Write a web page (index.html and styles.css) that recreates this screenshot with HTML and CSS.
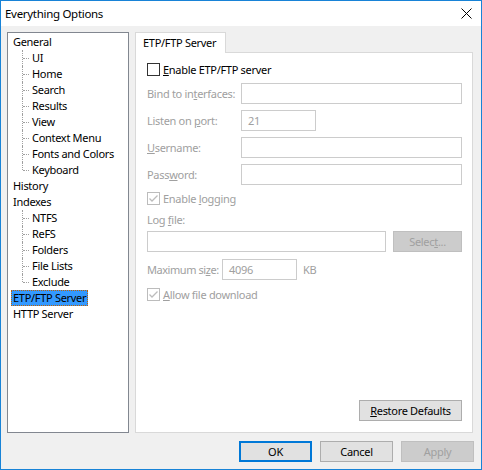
FILE: index.html
```html
<!DOCTYPE html>
<html>
<head>
<meta charset="utf-8">
<link rel="stylesheet" href="styles.css">
</head>
<body>
<div class="window">
  <div class="titlebar">
    <span class="title">Everything Options</span>
    <svg class="close" width="11" height="11" viewBox="0 0 11 11"><path d="M0.5 0.5 L10.5 10.5 M10.5 0.5 L0.5 10.5" stroke="#000" stroke-width="1" fill="none"/></svg>
  </div>
  <div class="client">
    <div class="main">
      <div class="tree">
        <div class="node">General</div>
        <div class="group">
          <div class="child">UI</div>
          <div class="child">Home</div>
          <div class="child">Search</div>
          <div class="child">Results</div>
          <div class="child">View</div>
          <div class="child">Context Menu</div>
          <div class="child">Fonts and Colors</div>
          <div class="child last">Keyboard</div>
        </div>
        <div class="node">History</div>
        <div class="node">Indexes</div>
        <div class="group">
          <div class="child">NTFS</div>
          <div class="child">ReFS</div>
          <div class="child">Folders</div>
          <div class="child">File Lists</div>
          <div class="child last">Exclude</div>
        </div>
        <div class="node selrow"><span class="sel">ETP/FTP Server</span></div>
        <div class="node">HTTP Server</div>
      </div>
      <div class="tabs">
        <div class="tabstrip"><div class="tab">ETP/FTP Server</div></div>
        <div class="panel">
          <div class="cbrow first">
            <span class="cb"></span><span class="cbtext"><u>E</u>nable ETP/FTP server</span>
          </div>
          <div class="field">
            <span class="lbl">Bind to in<u>t</u>erfaces:</span><div class="edit grow"></div>
          </div>
          <div class="field gap6">
            <span class="lbl">Listen on <u>p</u>ort:</span><div class="edit port">21</div>
          </div>
          <div class="field gap6">
            <span class="lbl"><u>U</u>sername:</span><div class="edit grow"></div>
          </div>
          <div class="field gap6">
            <span class="lbl">Pass<u>w</u>ord:</span><div class="edit grow"></div>
          </div>
          <div class="cbrow dis">
            <span class="cb checked"><svg width="11" height="11" viewBox="0 0 11 11"><path d="M1.5 5.5 L4 8 L9.5 2.5" stroke="#bcbcbc" stroke-width="1.3" fill="none"/></svg></span><span class="cbtext">Enable <u>l</u>ogging</span>
          </div>
          <div class="textrow">Log <u>f</u>ile:</div>
          <div class="logrow">
            <div class="edit grow"></div>
            <div class="btn disabled select">Selec<u>t</u>...</div>
          </div>
          <div class="field maxrow">
            <span class="lbl short">Maximum si<u>z</u>e:</span><div class="edit size">4096</div><span class="unit">KB</span>
          </div>
          <div class="cbrow dis allow">
            <span class="cb checked"><svg width="11" height="11" viewBox="0 0 11 11"><path d="M1.5 5.5 L4 8 L9.5 2.5" stroke="#bcbcbc" stroke-width="1.3" fill="none"/></svg></span><span class="cbtext"><u>A</u>llow file download</span>
          </div>
          <div class="restore-row">
            <div class="btn restore"><u>R</u>estore Defaults</div>
          </div>
        </div>
      </div>
    </div>
    <div class="buttons">
      <div class="btn dlg default">OK</div>
      <div class="btn dlg">Cancel</div>
      <div class="btn dlg disabled">Apply</div>
    </div>
  </div>
</div>
</body>
</html>
```
FILE: styles.css
```css
* { box-sizing: border-box; }
html, body { margin: 0; padding: 0; background: #f0f0f0; }
body {
  font-family: "Segoe UI", "Noto Sans", sans-serif;
  font-size: 11px;
  letter-spacing: -0.3px;
  color: #000;
}
.window {
  width: 482px;
  height: 470px;
  border: 1px solid #1883d7;
  background: #f0f0f0;
  display: flex;
  flex-direction: column;
}
.titlebar {
  height: 25px;
  background: #fff;
  display: flex;
  align-items: center;
  justify-content: space-between;
  padding-left: 4px;
  padding-right: 9px;
}
.title { font-size: 11.5px; line-height: 16px; padding-top: 1px; }
.close { display: block; }
.client {
  flex: 1;
  display: flex;
  flex-direction: column;
  padding: 6px 7px 7px 6px;
}
.main {
  height: 401px;
  display: flex;
  gap: 6px;
}
.tree {
  width: 122px;
  background: #fff;
  border: 1px solid #828790;
  padding-top: 1px;
}
.node, .child {
  height: 16px;
  line-height: 16px;
  white-space: nowrap;
}
.node { padding-left: 5px; }
.child { padding-left: 24px; position: relative; }
.child::before {
  content: "";
  position: absolute;
  left: 14px;
  top: 0;
  bottom: 0;
  border-left: 1px dotted #a0a0a0;
}
.child.last::before { bottom: 8px; }
.child::after {
  content: "";
  position: absolute;
  left: 15px;
  width: 6px;
  top: 8px;
  border-top: 1px dotted #a0a0a0;
}
.selrow { padding-left: 3px; }
.sel {
  display: inline-block;
  height: 16px;
  line-height: 14px;
  padding: 0 1px;
  background: #3399ff;
  border: 1px dotted #c06000;
}
.tabs {
  flex: 1;
  display: flex;
  flex-direction: column;
  margin-right: 1px;
}
.tabstrip { height: 20px; display: flex; }
.tab {
  width: 91px;
  height: 21px;
  background: #fff;
  border: 1px solid #d9d9d9;
  border-bottom: none;
  padding-left: 7px;
  line-height: 19px;
  white-space: nowrap;
  position: relative;
  z-index: 1;
}
.panel {
  flex: 1;
  background: #fff;
  border: 1px solid #d9d9d9;
  padding: 0 10px 11px 11px;
  display: flex;
  flex-direction: column;
}
.cbrow {
  height: 15px;
  display: flex;
  align-items: center;
  margin-top: 6px;
  white-space: nowrap;
}
.cbrow.first { margin-top: 9px; }
.cbrow.allow { margin-top: 7px; }
.cb {
  width: 13px;
  height: 13px;
  border: 1px solid #333;
  background: #fff;
  display: flex;
  align-items: center;
  justify-content: center;
  margin-right: 3px;
  flex: none;
}
.cb.checked { border-color: #bcbcbc; }
.cb svg { display: block; }
.dis .cbtext { color: #a0a0a0; }
.field {
  height: 21px;
  display: flex;
  align-items: center;
  margin-top: 6px;
  color: #a0a0a0;
}
.lbl { width: 94px; flex: none; white-space: nowrap; }
.lbl.short { width: 75px; letter-spacing: -0.45px; }
.edit {
  height: 21px;
  border: 1px solid #cccccc;
  background: #fff;
  padding-left: 6px;
  line-height: 19px;
  color: #a0a0a0;
}
.grow { flex: 1; }
.port { width: 75px; }
.size { width: 75px; }
.unit { margin-left: 6px; }
.textrow {
  height: 15px;
  line-height: 15px;
  margin-top: 6px;
  color: #a0a0a0;
}
.logrow {
  height: 21px;
  display: flex;
  gap: 7px;
  margin-top: 4px;
}
.maxrow { margin-top: 7px; }
.btn {
  height: 21px;
  border: 1px solid #adadad;
  background: #e1e1e1;
  display: flex;
  align-items: center;
  justify-content: center;
  white-space: nowrap;
}
.btn.disabled {
  background: #cccccc;
  border-color: #bfbfbf;
  color: #a0a0a0;
}
.select { width: 69px; }
.restore-row {
  margin-top: auto;
  display: flex;
  justify-content: flex-end;
}
.restore { width: 103px; }
.buttons {
  margin-top: 8px;
  display: flex;
  justify-content: flex-end;
  gap: 8px;
}
.dlg { width: 73px; }
.default { border: 2px solid #0078d7; }
```
